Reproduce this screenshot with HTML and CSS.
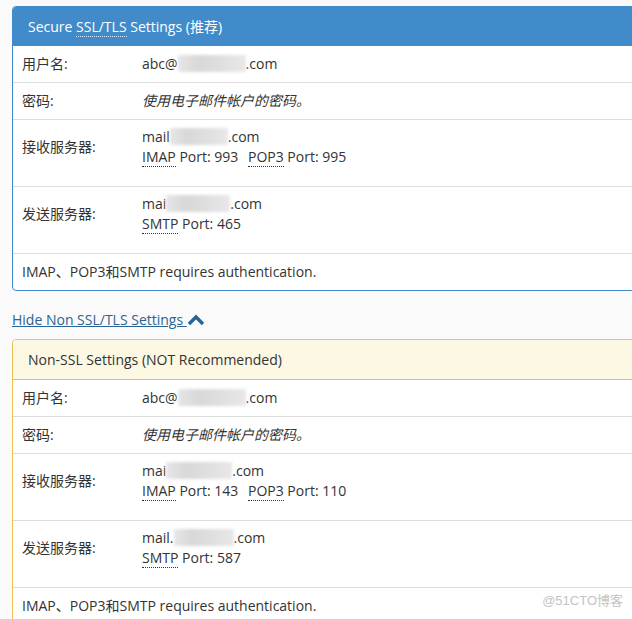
FILE: index.html
```html
<!DOCTYPE html>
<html>
<head>
<meta charset="utf-8">
<link rel="stylesheet" href="styles.css">
</head>
<body>
<div class="page">
  <div class="panel panel-primary">
    <div class="panel-heading">Secure <abbr>SSL/TLS</abbr> Settings (推荐)</div>
    <div class="row">
      <div class="label">用户名:</div>
      <div class="value">abc@<span class="blur" style="width:68px"></span>.com</div>
    </div>
    <div class="row">
      <div class="label">密码:</div>
      <div class="value"><em>使用电子邮件帐户的密码。</em></div>
    </div>
    <div class="row row-2">
      <div class="label">接收服务器:</div>
      <div class="value">
        <div>mail<span class="blur" style="width:58px"></span>.com</div>
        <div class="ports"><abbr>IMAP</abbr> Port: 993 <span class="gap"></span><abbr>POP3</abbr> Port: 995</div>
      </div>
    </div>
    <div class="row row-2">
      <div class="label">发送服务器:</div>
      <div class="value">
        <div>mai<span class="blur" style="width:64px"></span>.com</div>
        <div class="ports"><abbr>SMTP</abbr> Port: 465</div>
      </div>
    </div>
    <div class="row note">IMAP、POP3和SMTP requires authentication.</div>
  </div>

  <div class="toggle"><a href="#">Hide Non SSL/TLS Settings <svg class="chev" width="18" height="13" viewBox="0 0 18 13"><polyline points="2,11 9,4 16,11" fill="none" stroke="currentColor" stroke-width="3.4"/></svg></a></div>

  <div class="panel panel-warning">
    <div class="panel-heading">Non-SSL Settings (NOT Recommended)</div>
    <div class="row">
      <div class="label">用户名:</div>
      <div class="value">abc@<span class="blur" style="width:68px"></span>.com</div>
    </div>
    <div class="row">
      <div class="label">密码:</div>
      <div class="value"><em>使用电子邮件帐户的密码。</em></div>
    </div>
    <div class="row row-2">
      <div class="label">接收服务器:</div>
      <div class="value">
        <div>mai<span class="blur" style="width:66px"></span>.com</div>
        <div class="ports"><abbr>IMAP</abbr> Port: 143 <span class="gap"></span><abbr>POP3</abbr> Port: 110</div>
      </div>
    </div>
    <div class="row row-2">
      <div class="label">发送服务器:</div>
      <div class="value">
        <div>mail.<span class="blur" style="width:60px"></span>.com</div>
        <div class="ports"><abbr>SMTP</abbr> Port: 587</div>
      </div>
    </div>
    <div class="row note">IMAP、POP3和SMTP requires authentication.</div>
  </div>
</div>
<div class="watermark">@51CTO博客</div>
</body>
</html>
```
FILE: styles.css
```css
html, body {
  margin: 0;
  padding: 0;
  background: #fafafa;
  overflow: hidden;
}
body {
  font-family: "Open Sans", "Noto Sans CJK SC", sans-serif;
  font-size: 14px;
  line-height: 20px;
  color: #333;
  height: 619px;
  position: relative;
}
.page {
  padding: 6px 0 0 12px;
}
.panel {
  width: 660px;
  background: #fff;
  border: 1px solid #428bca;
  border-radius: 4px;
  margin-bottom: 20px;
  overflow: hidden;
}
.panel-heading {
  padding: 10px 15px 9px;
  line-height: 20px;
  font-size: 14px;
}
.panel-primary .panel-heading {
  background: #428bca;
  color: #fff;
}
.panel-warning {
  border-color: #f0c050;
}
.panel-warning .panel-heading {
  background: #fcf8e3;
  color: #333;
  border-bottom: 1px solid #f0c050;
}
abbr {
  text-decoration: none;
  border-bottom: 1px dotted currentColor;
}
.panel-primary .panel-heading abbr {
  border-bottom-color: rgba(255,255,255,0.8);
}
.row {
  display: flex;
  align-items: center;
  padding: 8px 9px;
  border-top: 1px solid #ddd;
}
.panel-heading + .row { border-top: 0; }
.row-2 {
  padding-top: 7px;
  padding-bottom: 19px;
}
.label {
  width: 120px;
  flex: none;
}
.value em { font-style: italic; }
.ports abbr { line-height: 18px; }
.gap {
  display: inline-block;
  width: 6px;
}
.blur {
  display: inline-block;
  height: 17px;
  vertical-align: -3px;
  background: linear-gradient(90deg, #e6e6e6, #d8d8d8 30%, #dedede 60%, #e8e8e8);
  filter: blur(1.5px);
}
.note {
  display: block;
}
.toggle {
  margin: -1px 0 9px;
  line-height: 20px;
}
.toggle a {
  color: #2a6496;
  text-decoration: underline;
}
.chev {
  vertical-align: -1px;
  color: #2a6496;
  text-decoration: none;
}
.watermark {
  position: absolute;
  right: 9px;
  bottom: 8px;
  font-family: "Liberation Sans", "Noto Sans CJK SC", sans-serif;
  font-size: 13px;
  color: #c4c4c4;
}
```
